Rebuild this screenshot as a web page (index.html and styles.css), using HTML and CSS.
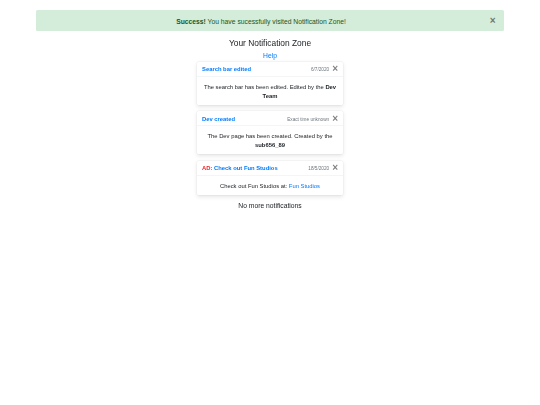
FILE: index.html
```html
<!DOCTYPE html>
<html lang="en">
<head>
<meta charset="utf-8">
<title>Notification Zone</title>
<link rel="stylesheet" href="styles.css">
</head>
<body>
<div class="alert">
  <span><strong>Success!</strong> You have sucessfully visited Notification Zone!</span>
  <span class="alert-close">×</span>
</div>
<h1 class="title">Your Notification Zone</h1>
<a class="help" href="#">Help</a>
<div class="list">
  <section class="toast">
    <header class="toast-head">
      <strong class="toast-title"><a href="#">Search bar edited</a></strong>
      <small class="toast-time">6/7/2020</small>
      <span class="toast-close">×</span>
    </header>
    <p class="toast-body">The search bar has been edited. Edited by the <strong>Dev</strong> <strong>Team</strong></p>
  </section>
  <section class="toast">
    <header class="toast-head">
      <strong class="toast-title"><a href="#">Dev created</a></strong>
      <small class="toast-time">Exact time unknown</small>
      <span class="toast-close">×</span>
    </header>
    <p class="toast-body">The Dev page has been created. Created by the <strong>sub656_89</strong></p>
  </section>
  <section class="toast">
    <header class="toast-head">
      <strong class="toast-title"><span class="ad">AD:</span> <a href="#">Check out Fun Studios</a></strong>
      <small class="toast-time">18/5/2020</small>
      <span class="toast-close">×</span>
    </header>
    <p class="toast-body">Check out Fun Studios at: <a href="#">Fun Studios</a></p>
  </section>
</div>
<p class="end">No more notifications</p>
</body>
</html>
```

FILE: styles.css
```css
* { box-sizing: border-box; }
html, body { margin: 0; padding: 0; }
body {
  background: #fff;
  color: #212529;
  font-family: "Liberation Sans", Arial, sans-serif;
  font-size: 6.75px;
  line-height: 9px;
  display: flex;
  flex-direction: column;
  align-items: center;
  padding-top: 10px;
  filter: blur(.3px);
}
a { color: #007bff; text-decoration: none; }
strong { font-weight: 700; }
.alert {
  width: 468px;
  height: 21px;
  padding: 1px 18px 0 0;
  background: #d4edda;
  color: #155724;
  border-radius: 1.5px;
  display: flex;
  align-items: center;
  justify-content: center;
  position: relative;
}
.alert-close {
  position: absolute;
  right: 8.5px;
  top: 6px;
  font-size: 10px;
  font-weight: 700;
  color: #000;
  opacity: .5;
}
.title {
  margin: 5px 0 0;
  font-size: 8.4px;
  font-weight: 400;
  line-height: 14px;
}
.help { margin-top: 1px; line-height: 9px; }
.list {
  width: 146px;
  margin-top: 1.5px;
  display: flex;
  flex-direction: column;
  gap: 6.5px;
}
.toast {
  background: #fff;
  border-radius: 1.5px;
  box-shadow: 0 0 0 .4px rgba(0,0,0,.06), 0 1.5px 4px rgba(0,0,0,.1);
}
.toast-head {
  display: flex;
  align-items: center;
  height: 15px;
  padding: 2px 5px 0 5px;
  border-bottom: 1px solid #f4f5f6;
  color: #6c757d;
}
.toast-title { margin-right: auto; font-size: 5.85px; }
.ad { color: #e6262e; }
.toast-time { font-size: 4.7px; }
.toast-close {
  margin-left: 3px;
  font-size: 10px;
  font-weight: 700;
  color: #000;
  opacity: .5;
  line-height: 9px;
  position: relative;
  top: -1px;
}
.toast-body {
  margin: 0;
  padding: 6px 4.5px 4px;
  text-align: center;
  font-size: 5.85px;
  line-height: 9px;
}
.end { margin: 6.5px 0 0; }
```
